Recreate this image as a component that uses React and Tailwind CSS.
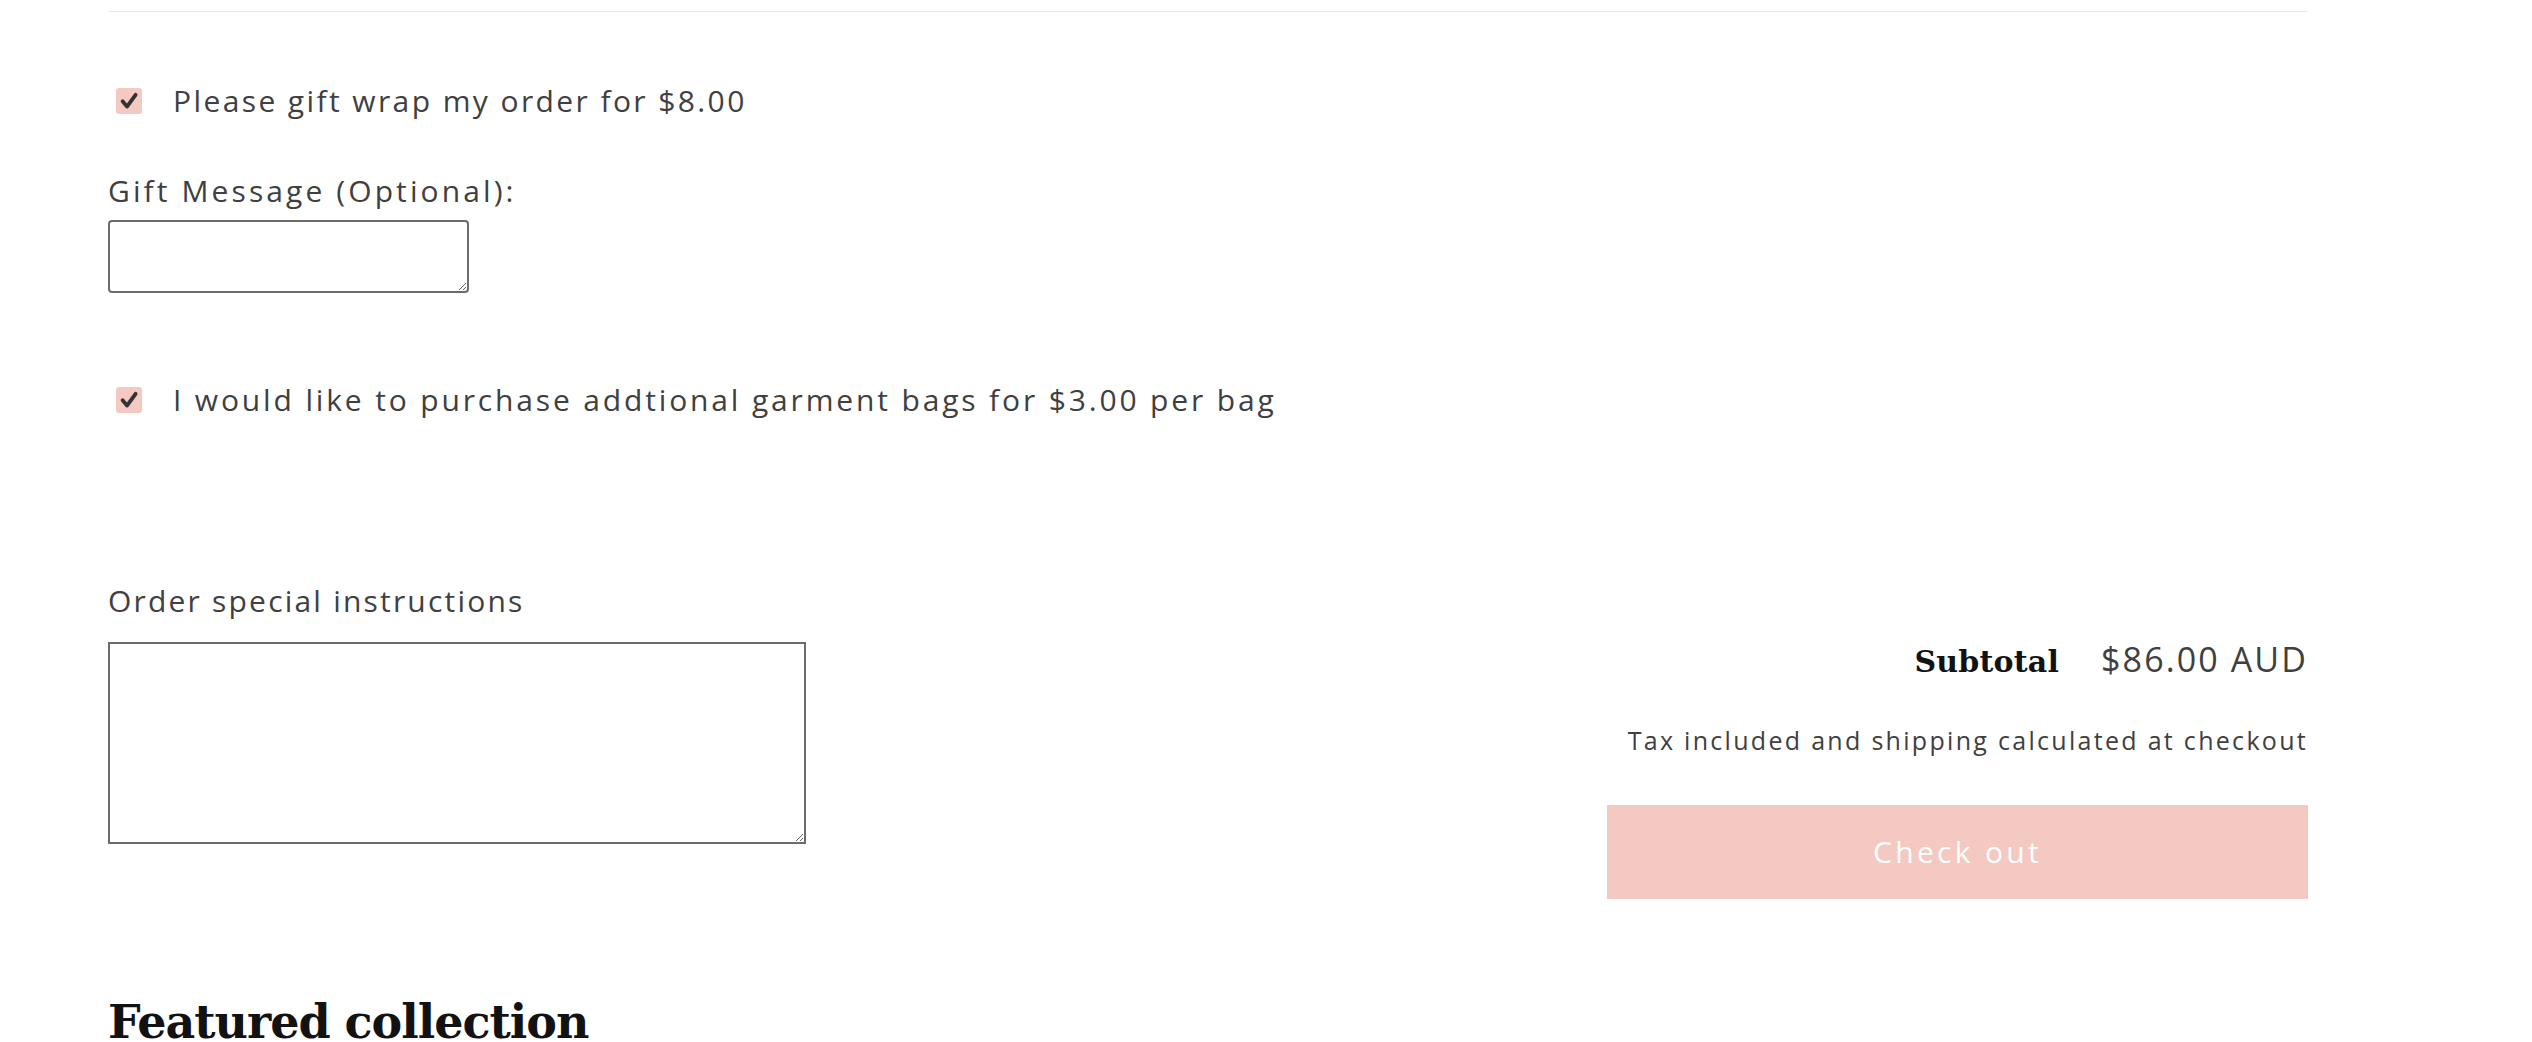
import React from "react";

function Check() {
  return (
    <span className="flex h-[26px] w-[26px] shrink-0 items-center justify-center rounded-[3px] bg-[#f3c9c1]">
      <svg width="26" height="26" viewBox="0 0 26 26">
        <path d="M6.6 13.2 L11 18.6 L19.6 6.8" fill="none" stroke="#333333" strokeWidth="3.8" strokeLinecap="round" strokeLinejoin="round" />
      </svg>
    </span>
  );
}

export default function App() {
  const body = "font-['Open_Sans',sans-serif] text-[#404040]";
  return (
    <div className="min-h-[1042px] w-full overflow-hidden bg-white">
      <div className="ml-[108px] w-[2200px]">
        <div className="h-[11px]" />
        <div className="border-t border-[#e8e8e8]" />

        <label className={`mt-[71px] flex h-[36px] items-center gap-[31px] pl-[8px] ${body} text-[30px] leading-[36px] tracking-[2.4px]`}>
          <Check />
          <span>Please gift wrap my order for $8.00</span>
        </label>

        <div className={`mt-[54px] ${body} text-[30px] leading-[36px] tracking-[3.1px]`}>Gift Message (Optional):</div>
        <textarea className="mt-[11px] block h-[73px] w-[361px] rounded-[4px] border-2 border-[#6c6c6c] bg-white" />

        <label className={`mt-[89px] flex h-[36px] items-center gap-[31px] pl-[8px] ${body} text-[30px] leading-[36px] tracking-[2.85px]`}>
          <Check />
          <span>I would like to purchase addtional garment bags for $3.00 per bag</span>
        </label>

        <div className="mt-[165px] flex items-start justify-between">
          <div className="flex flex-col">
            <div className={`${body} text-[30px] leading-[36px] tracking-[2.2px]`}>Order special instructions</div>
            <textarea className="mt-[23px] block h-[202px] w-[698px] border-2 border-[#6c6c6c] bg-white" />
          </div>

          <div className="flex w-[701px] flex-col items-end pt-[59px]">
            <div className="flex items-baseline gap-[42px]">
              <span className="font-['DejaVu_Serif',serif] text-[30px] font-bold leading-[30px] tracking-[0.2px] text-[#121212]">Subtotal</span>
              <span className={`${body} text-[34px] leading-[34px] tracking-[2.1px]`}>$86.00 AUD</span>
            </div>
            <div className={`mt-[48px] ${body} text-[25px] leading-[30px] tracking-[2.3px]`}>
              Tax included and shipping calculated at checkout
            </div>
            <button className="mt-[50px] flex h-[94px] w-[701px] items-center justify-center bg-[#f3c9c1] font-['Open_Sans',sans-serif] text-[30px] leading-[36px] tracking-[3.3px] text-white">
              Check out
            </button>
          </div>
        </div>

        <h2 className="mt-[103px] font-['DejaVu_Serif',serif] text-[46px] font-bold leading-[40px] tracking-[-1px] text-[#121212]">
          Featured collection
        </h2>
      </div>
    </div>
  );
}
